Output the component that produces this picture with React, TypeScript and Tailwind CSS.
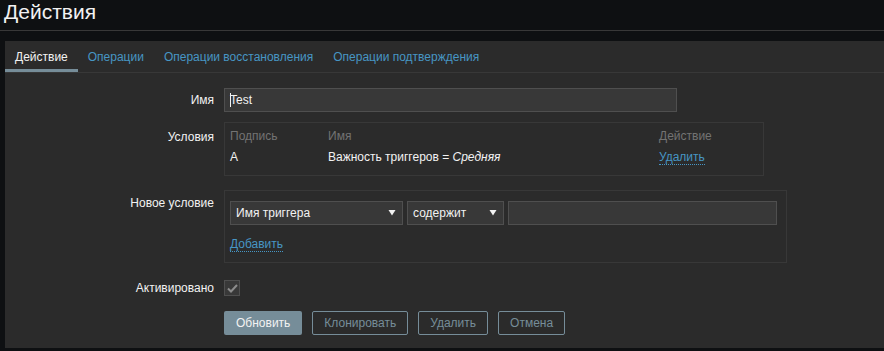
import React from "react";

const font = { fontFamily: '"Liberation Sans", Arial, sans-serif' };

function Arrow() {
  return (
    <svg width="8" height="6" viewBox="0 0 8 6" className="shrink-0">
      <path d="M0.5 0 L7.5 0 L4 5.5 Z" fill="#f2f2f2" />
    </svg>
  );
}

export default function App() {
  return (
    <div className="w-[884px] h-[351px] bg-[#0e1012] overflow-hidden text-[12px] text-[#f2f2f2]" style={font}>
      <div className="h-[31px] border-b border-[#383838] px-[4px] flex items-start">
        <h1 className="text-[21px] leading-[24px] text-[#f2f2f2]">Действия</h1>
      </div>
      <div className="ml-[5px] mt-[10px] bg-[#2b2b2b] h-[307px]">
        <div className="flex h-[32px] border-b border-[#383838]">
          <div className="px-[10px] flex items-center border-b-[3px] border-[#768d99] text-[#f2f2f2] pt-[3px]">Действие</div>
          <div className="px-[10px] flex items-center text-[#4796c4]">Операции</div>
          <div className="px-[10px] flex items-center text-[#4796c4]">Операции восстановления</div>
          <div className="px-[10px] flex items-center text-[#4796c4]">Операции подтверждения</div>
        </div>

        <div className="pt-[15px]">
          <div className="flex items-center">
            <div className="w-[209px] text-right pr-0">Имя</div>
            <div className="ml-[10px] w-[453px] h-[24px] bg-[#383838] border border-[#4f4f4f] flex items-center px-[5px]">
              <span className="w-px h-[14px] bg-[#f2f2f2] mr-[-1px]"></span>
              <span>Test</span>
            </div>
          </div>

          <div className="flex mt-[10px]">
            <div className="w-[209px] text-right pt-[6px]">Условия</div>
            <div className="ml-[10px] w-[540px] h-[54px] border border-[#383838] px-[5px] pt-[5px]">
              <div className="flex h-[16px] items-center text-[#737373]">
                <div className="w-[98px]">Подпись</div>
                <div className="w-[331px]">Имя</div>
                <div>Действие</div>
              </div>
              <div className="flex h-[18px] items-center mt-[4px]">
                <div className="w-[98px]">A</div>
                <div className="w-[331px]">
                  Важность триггеров = <i>Средняя</i>
                </div>
                <div className="text-[#4796c4] border-b border-dotted border-[#4796c4] leading-[14px]">Удалить</div>
              </div>
            </div>
          </div>

          <div className="flex mt-[14px]">
            <div className="w-[209px] text-right pt-[4px]">Новое условие</div>
            <div className="ml-[10px] w-[563px] h-[73px] border border-[#383838] pl-[5px] pt-[10px]">
              <div className="flex gap-[4px]">
                <div className="w-[173px] h-[24px] bg-[#383838] border border-[#4f4f4f] flex items-center justify-between pl-[5px] pr-[6px]">
                  <span>Имя триггера</span>
                  <Arrow />
                </div>
                <div className="w-[97px] h-[24px] bg-[#383838] border border-[#4f4f4f] flex items-center justify-between pl-[5px] pr-[6px]">
                  <span>содержит</span>
                  <Arrow />
                </div>
                <div className="w-[269px] h-[24px] bg-[#383838] border border-[#4f4f4f]"></div>
              </div>
              <div className="mt-[12px] inline-block text-[#4796c4] border-b border-dotted border-[#4796c4] leading-[14px]">Добавить</div>
            </div>
          </div>

          <div className="flex items-center mt-[16px]">
            <div className="w-[209px] text-right">Активировано</div>
            <div className="ml-[10px] w-[16px] h-[16px] bg-[#383838] border border-[#4f4f4f] flex items-center justify-center">
              <svg width="11" height="9" viewBox="0 0 11 9">
                <path d="M1 4.5 L4 7.5 L10 1" stroke="#8c8c8c" strokeWidth="2" fill="none" />
              </svg>
            </div>
          </div>

          <div className="flex mt-[14px] ml-[219px] gap-[10px]">
            <div className="h-[24px] px-[12px] bg-[#768d99] flex items-center text-[#f2f2f2] rounded-[2px]">Обновить</div>
            <div className="h-[24px] px-[11px] border border-[#768d99] flex items-center text-[#768d99] rounded-[2px]">Клонировать</div>
            <div className="h-[24px] px-[11px] border border-[#768d99] flex items-center text-[#768d99] rounded-[2px]">Удалить</div>
            <div className="h-[24px] px-[11px] border border-[#768d99] flex items-center text-[#768d99] rounded-[2px]">Отмена</div>
          </div>
        </div>
      </div>
    </div>
  );
}
